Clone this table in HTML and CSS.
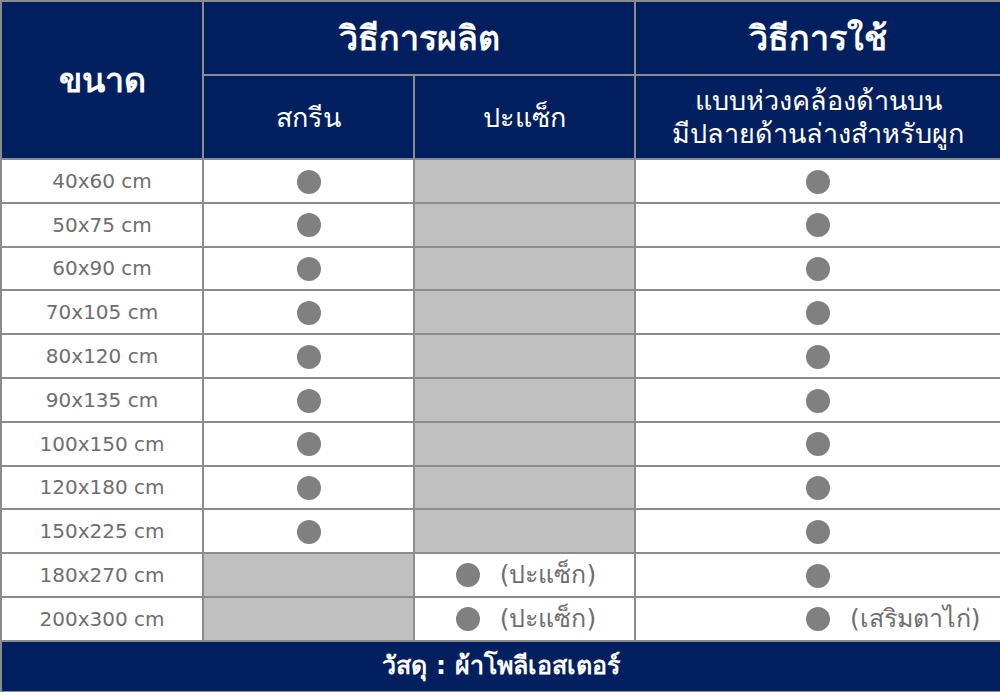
FILE: index.html
```html
<!DOCTYPE html>
<html lang="th">
<head>
<meta charset="utf-8">
<title>ขนาด</title>
<link rel="stylesheet" href="styles.css">
</head>
<body>
<table class="spec">
  <colgroup>
    <col class="c-size">
    <col class="c-screen">
    <col class="c-patch">
    <col class="c-use">
  </colgroup>
  <thead>
    <tr class="h1">
      <th rowspan="2" class="big">ขนาด</th>
      <th colspan="2" class="big">วิธีการผลิต</th>
      <th class="big">วิธีการใช้</th>
    </tr>
    <tr class="h2">
      <th class="sub">สกรีน</th>
      <th class="sub">ปะแซ็ก</th>
      <th class="sub two">แบบห่วงคล้องด้านบน<br>มีปลายด้านล่างสำหรับผูก</th>
    </tr>
  </thead>
  <tbody>
    <tr><td>40x60 cm</td><td><span class="dot"></span></td><td class="off"></td><td><span class="dot"></span></td></tr>
    <tr><td>50x75 cm</td><td><span class="dot"></span></td><td class="off"></td><td><span class="dot"></span></td></tr>
    <tr><td>60x90 cm</td><td><span class="dot"></span></td><td class="off"></td><td><span class="dot"></span></td></tr>
    <tr><td>70x105 cm</td><td><span class="dot"></span></td><td class="off"></td><td><span class="dot"></span></td></tr>
    <tr><td>80x120 cm</td><td><span class="dot"></span></td><td class="off"></td><td><span class="dot"></span></td></tr>
    <tr><td>90x135 cm</td><td><span class="dot"></span></td><td class="off"></td><td><span class="dot"></span></td></tr>
    <tr><td>100x150 cm</td><td><span class="dot"></span></td><td class="off"></td><td><span class="dot"></span></td></tr>
    <tr><td>120x180 cm</td><td><span class="dot"></span></td><td class="off"></td><td><span class="dot"></span></td></tr>
    <tr><td>150x225 cm</td><td><span class="dot"></span></td><td class="off"></td><td><span class="dot"></span></td></tr>
    <tr><td>180x270 cm</td><td class="off"></td><td><div class="pair"><span class="dot"></span><span class="th">(ปะแซ็ก)</span></div></td><td><span class="dot"></span></td></tr>
    <tr><td>200x300 cm</td><td class="off"></td><td><div class="pair"><span class="dot"></span><span class="th">(ปะแซ็ก)</span></div></td><td><div class="mid"><span></span><span class="dot"></span><span class="th note">(เสริมตาไก่)</span></div></td></tr>
  </tbody>
  <tfoot>
    <tr><td colspan="4" class="foot">วัสดุ : ผ้าโพลีเอสเตอร์</td></tr>
  </tfoot>
</table>
</body>
</html>
```
FILE: styles.css
```css
html, body {
  margin: 0;
  padding: 0;
  background: #ffffff;
}
body {
  font-family: "DejaVu Sans", "Noto Sans", sans-serif;
}
.spec {
  width: 1000px;
  table-layout: fixed;
  border-collapse: collapse;
  border: 2px solid #8c8c8c;
}
.c-size { width: 202px; }
.c-screen { width: 211px; }
.c-patch { width: 221px; }
.c-use { width: 366px; }
.spec th, .spec td {
  border: 2px solid #8c8c8c;
  padding: 0;
  text-align: center;
  vertical-align: middle;
}
.spec th {
  background: #02205f;
  color: #ffffff;
}
.h1 { height: 74px; }
.h2 { height: 84px; }
.big {
  font-size: 34px;
  font-weight: bold;
  line-height: 40px;
}
.sub {
  font-size: 27px;
  font-weight: normal;
  line-height: 33px;
}
tbody tr { height: 43.8px; }
tbody td {
  font-size: 20px;
  color: #6e6e6e;
  line-height: 24px;
}
.th {
  font-size: 25px;
  line-height: 28px;
}
td.off { background: #c0c0c0; }
.dot {
  display: inline-block;
  width: 24px;
  height: 24px;
  border-radius: 50%;
  background: #808080;
  vertical-align: middle;
}
.pair {
  display: flex;
  justify-content: center;
  align-items: center;
  gap: 20px;
  padding-left: 3px;
}
.mid {
  display: grid;
  grid-template-columns: 1fr auto 1fr;
  align-items: center;
  column-gap: 20px;
}
.note { text-align: left; }
.foot {
  height: 49px;
  background: #02205f;
  color: #ffffff;
  font-size: 25px;
  font-weight: bold;
  line-height: 30px;
}
```
